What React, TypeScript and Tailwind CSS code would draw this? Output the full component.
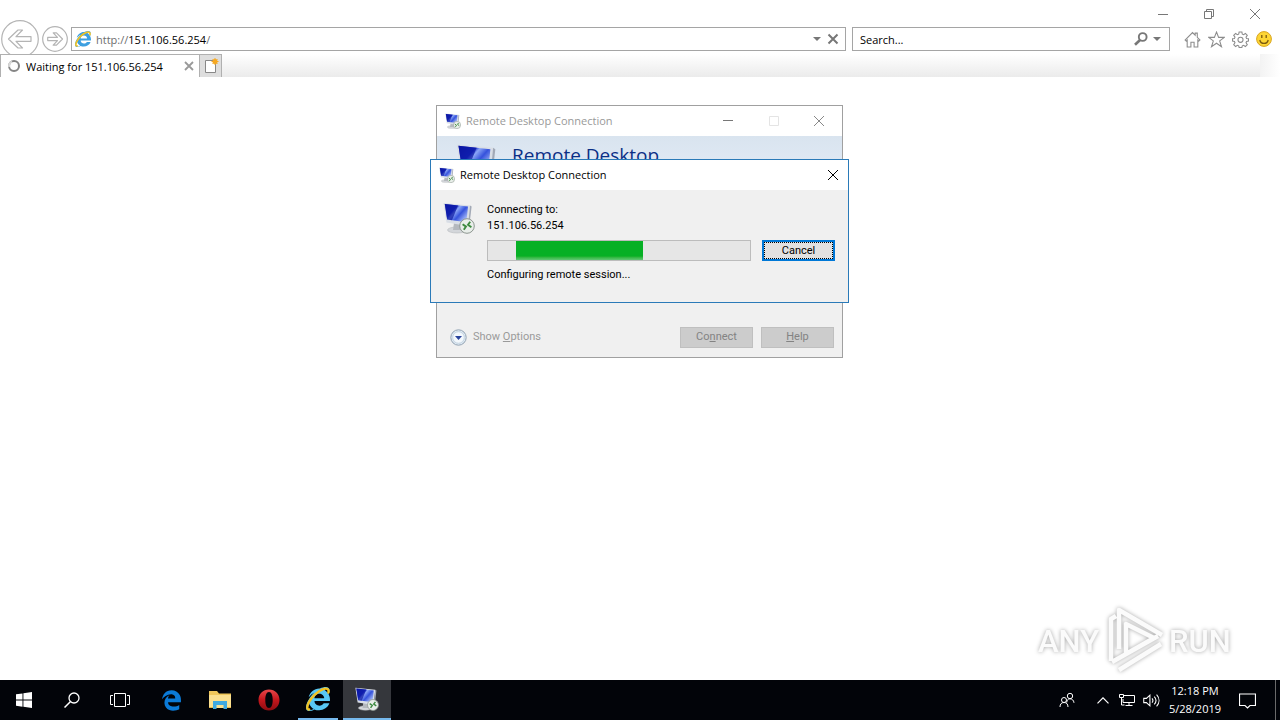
import type { ReactNode } from 'react';
import { FaInternetExplorer, FaEdgeLegacy } from 'react-icons/fa6';

const segoe = "font-['Open_Sans','Noto_Sans',sans-serif]";
const msSans = "font-['Roboto','Liberation_Sans',sans-serif]";

function RemoteIcon({ className }: { className: string }) {
  return (
    <svg viewBox="0 0 32 32" className={className} aria-hidden="true">
      <defs>
        <linearGradient id="rdScreen" x1="0" y1="0" x2="1" y2="0.7">
          <stop offset="0" stopColor="#0a14a8" />
          <stop offset="0.4" stopColor="#1a2fd0" />
          <stop offset="0.5" stopColor="#8ba6f6" />
          <stop offset="0.7" stopColor="#3552dc" />
          <stop offset="1" stopColor="#a9bdf8" />
        </linearGradient>
      </defs>
      <ellipse cx="14" cy="28" rx="9.5" ry="3" fill="#d3d6da" stroke="#b5b8bc" strokeWidth="0.6" />
      <path d="M11 21h7l1 7h-9z" fill="#b4b8be" />
      <path d="M0.5 1 27 3.5 25 24 3.5 20.5z" fill="#d9dee6" />
      <path d="M27 3.5 28.6 4.5 26.4 23.4 25 24z" fill="#a2a9b6" />
      <path d="M1.8 2 25 4.6 23.4 20.2 4.2 17.6z" fill="url(#rdScreen)" />
      <path d="M1.8 2 15 3.4 9 18.2 4.2 17.6z" fill="#0b179f" opacity="0.7" />
      <circle cx="24" cy="24" r="7.3" fill="#e9eeea" stroke="#8d9690" strokeWidth="1" />
      <path d="M19.6 22.2 23 24.6 20.8 27.8M28.4 25.2 25 22.8 27.2 19.8" fill="none" stroke="#3d8a3f" strokeWidth="1.9" />
    </svg>
  );
}

function IeIcon({ size }: { size: 'small' | 'large' }) {
  const small = size === 'small';
  return (
    <span className={small ? 'relative block size-4' : 'relative block size-6'}>
      <FaInternetExplorer className={small ? 'size-4 text-[#3d9fe0]' : 'size-6 text-[#58c8f5]'} />
      <svg viewBox="0 0 24 24" className="absolute inset-0 size-full" aria-hidden="true">
        <path
          d="M3.2 22.4C1 22.8.6 20 2.6 15.8 5.4 10.2 11.5 4.4 17 2.2 21 .7 23.2 2 22.4 5.6"
          fill="none"
          stroke="#f3c322"
          strokeWidth="2.4"
          strokeLinecap="round"
        />
      </svg>
    </span>
  );
}

function CloseGlyph({ className }: { className: string }) {
  return (
    <svg viewBox="0 0 12 12" className={className} fill="none" stroke="currentColor" aria-hidden="true">
      <path d="M1 1 11 11M11 1 1 11" />
    </svg>
  );
}

function Line({ children, box = 16, className = 'size-4' }: { children: ReactNode; box?: number; className?: string }) {
  return (
    <svg viewBox={`0 0 ${box} ${box}`} className={className} fill="none" stroke="currentColor" aria-hidden="true">
      {children}
    </svg>
  );
}

function BrowserHeader() {
  const tool = 'flex h-6 w-6 items-center justify-center text-[#8c8c8c]';
  return (
    <header className={`${segoe} shrink-0 text-[11px] leading-4 text-black`}>
      <div className="flex h-[27px] justify-end pr-[2px] text-[#777]">
        <button aria-label="Minimize" className="flex w-[46px] items-center justify-center">
          <Line box={12} className="size-3"><path d="M1 6.5h10" /></Line>
        </button>
        <button aria-label="Restore" className="flex w-[46px] items-center justify-center">
          <Line box={12} className="size-3"><path d="M1.5 3.5h7v7h-7zM3.5 3.5v-2h7v7h-2" /></Line>
        </button>
        <button aria-label="Close" className="flex w-[46px] items-center justify-center">
          <CloseGlyph className="size-3" />
        </button>
      </div>

      <div className="flex h-6 items-center pr-1 pl-px">
        <button aria-label="Back" className="shrink-0 text-[#b4b4b4]">
          <svg viewBox="0 0 38 38" className="size-[38px]" fill="none" stroke="currentColor" strokeWidth="1.2">
            <circle cx="19" cy="19" r="18.300" fill="#fff" />
            <path d="M7.5 19 17 10h4.500L15 16.700h15v4.600H15l6.500 6.700H17z" strokeLinejoin="round" />
          </svg>
        </button>
        <button aria-label="Forward" className="mx-[3px] shrink-0 text-[#b4b4b4]">
          <svg viewBox="0 0 26 26" className="size-[26px]" fill="none" stroke="currentColor" strokeWidth="1.2">
            <circle cx="13" cy="13" r="12.300" fill="#fff" />
            <path d="M20.500 13 14.500 6.800h-3.300l4.300 4.600H5.700v3.200h9.800l-4.300 4.600h3.300z" strokeLinejoin="round" />
          </svg>
        </button>
        <div className="flex h-6 min-w-0 flex-1 items-center border border-[#a5a5a5] bg-white pr-1 pl-[3px]">
          <IeIcon size="small" />
          <div className="ml-[5px] flex-1 pt-px text-[#6d6d6d]" role="textbox" aria-label="Address">
            http://<span className="text-black">151.106.56.254</span>/
          </div>
          <button aria-label="Show address bar options" className="flex w-4 justify-center">
            <svg viewBox="0 0 8 4" className="h-1 w-2" fill="#777"><path d="M0 0h8L4 4z" /></svg>
          </button>
          <button aria-label="Stop" className="flex w-4 justify-center text-[#777]">
            <svg viewBox="0 0 12 12" className="size-3" stroke="currentColor" strokeWidth="2"><path d="M1.500 1.500 10.500 10.500M10.500 1.500 1.500 10.500" /></svg>
          </button>
        </div>
        <div className="ml-[6px] flex h-6 w-[318px] items-center border border-[#a5a5a5] bg-white pr-2 pl-[7px]">
          <input aria-label="Search" placeholder="Search..." className="min-w-0 flex-1 pt-px outline-none placeholder:text-black" />
          <button aria-label="Run search" className="text-[#777]">
            <Line className="size-4"><circle cx="9.700" cy="6" r="3.900" strokeWidth="1.900" /><path d="M7 9 2 13.800" strokeWidth="2.600" /></Line>
          </button>
          <button aria-label="Search providers" className="ml-1 flex w-2 justify-center">
            <svg viewBox="0 0 8 4" className="h-1 w-2" fill="#777"><path d="M0 0h8L4 4z" /></svg>
          </button>
        </div>
        <div className="ml-[10px] flex">
          <button aria-label="Home" className={tool}>
            <Line className="size-[17px]"><path d="M1 8.500 8 1.500l2.500 2.500V2h2v4L15 8.500l-1 1-1-1V15h-3.500v-4.500h-3V15H3V8.500l-1 1z" /></Line>
          </button>
          <button aria-label="Favorites" className={tool}>
            <Line className="size-[17px]"><path d="m8 1 2 5h5.300l-4.300 3.300 1.700 5.500L8 11.500l-4.700 3.300L5 9.300.7 6H6z" /></Line>
          </button>
          <button aria-label="Tools" className={tool}>
            <Line className="size-[17px]">
              <path d="M6.700 1h2.600l.4 2 1.200.5L12.600 2.300l1.800 1.800-1.200 1.700.5 1.200 1.800.3v2.200l-1.800.4-.5 1.200 1.200 1.700-1.800 1.800-1.700-1.200-1.200.5-.4 1.600H6.700l-.4-1.600-1.200-.5-1.700 1.200-1.800-1.800 1.200-1.700-.5-1.200-1.800-.4V7.300L2.300 7l.5-1.200-1.200-1.700 1.800-1.800 1.700 1.200L6.300 3z" />
              <circle cx="8" cy="8.300" r="2.400" />
            </Line>
          </button>
          <button aria-label="Send a smile" className={tool}>
            <svg viewBox="0 0 16 16" className="size-4">
              <circle cx="8" cy="8" r="7.400" fill="#fdd535" stroke="#d9a520" />
              <path d="M5.800 4v3M10.200 4v3M3.800 9c1 4.500 7.400 4.500 8.400 0" fill="none" stroke="#7a5a10" strokeWidth="1.300" />
            </svg>
          </button>
        </div>
      </div>

      <div className="relative z-10 mt-[3px] flex h-[23px]">
        <div className="flex w-[199px] items-center border-t border-l border-[#b0b0b0] bg-white pr-[5px] pl-[6px]">
          <svg viewBox="0 0 14 14" className="size-[14px]" fill="none" strokeWidth="2">
            <circle cx="7" cy="7" r="5" stroke="#858585" />
            <path d="M2.200 8A5 5 0 0 1 5 2.500" stroke="#d8d8d8" />
          </svg>
          <span className="ml-[5px] flex-1 pt-px whitespace-nowrap">Waiting for 151.106.56.254</span>
          <button aria-label="Close tab" className="text-[#999]">
            <svg viewBox="0 0 10 10" className="size-[10px]" stroke="currentColor" strokeWidth="1.800"><path d="M1 1 9 9M9 1 1 9" /></svg>
          </button>
        </div>
        <button aria-label="New tab" className="flex w-[23px] items-center justify-center border border-b-0 border-[#b0b0b0] bg-[#dedede]">
          <svg viewBox="0 0 16 18" className="h-[18px] w-4">
            <path d="M2.500 3.500h10v12h-10z" fill="#fff" stroke="#888" />
            <circle cx="12" cy="4.500" r="2.500" fill="#f6a821" />
            <path d="M12 1v7M8.500 4.500h7M9.500 2l5 5M14.500 2l-5 5" stroke="#f6a821" />
          </svg>
        </button>
        <div className="flex-1 bg-linear-to-b from-white to-[#ebebeb]" />
        <div className="w-5 bg-linear-to-r from-[#f3f3f3] to-white" />
      </div>
    </header>
  );
}

function LauncherDialog() {
  const button = 'h-[21px] w-[73px] border border-[#bfbfbf] bg-[#cccccc] text-[#838383]';
  return (
    <section aria-label="Remote Desktop launcher" className="absolute top-7 left-1/2 -ml-[204px] flex h-[253px] w-[407px] flex-col border border-[#a0a0a0] bg-[#f0f0f0]">
      <div className={`${segoe} flex h-[30px] items-center bg-white pl-2 text-[11px] text-[#999]`}>
        <RemoteIcon className="size-4" />
        <span className="ml-[5px] flex-1">Remote Desktop Connection</span>
        <button aria-label="Minimize launcher" className="flex w-[46px] justify-center text-[#777]">
          <Line box={12} className="size-3"><path d="M1 5.500h10" /></Line>
        </button>
        <button aria-label="Maximize launcher" disabled className="flex w-[45px] justify-center text-[#e4e4e4]">
          <Line box={12} className="size-3"><path d="M1.500 1.500h9v9h-9z" /></Line>
        </button>
        <button aria-label="Close launcher" className="flex w-[46px] justify-center text-[#888]">
          <CloseGlyph className="size-3" />
        </button>
      </div>
      <div className="flex h-[60px] items-start bg-linear-to-b from-[#d9e4ef] to-[#e6eefa] pt-[7px] pl-[19px]">
        <RemoteIcon className="size-11" />
        <h1 className={`${segoe} ml-3 text-[19px] leading-6 font-medium text-[#0b2f86]`}>Remote Desktop</h1>
      </div>
      <div className={`${msSans} mt-auto flex items-center pr-2 pb-[9px] pl-[13px] text-[11px]`}>
        <button className="flex flex-1 items-center gap-[6px] text-[#9a9a9a]">
          <svg viewBox="0 0 17 17" className="size-[17px]" aria-hidden="true">
            <circle cx="8.500" cy="8.500" r="7.700" fill="#dfe9f2" stroke="#92a3b3" />
            <circle cx="8.500" cy="8.500" r="5.800" fill="#f3f8fc" stroke="#c3d4e2" />
            <path d="M5 7h7L8.500 11z" fill="#28439c" />
          </svg>
          <span>Show <u>O</u>ptions</span>
        </button>
        <button className={button}>Co<u>n</u>nect</button>
        <button className={`${button} ml-2`}><u>H</u>elp</button>
      </div>
    </section>
  );
}

function ConnectingDialog() {
  return (
    <section aria-label="Connection progress" className="absolute top-[82px] left-1/2 -ml-[210px] flex h-[144px] w-[419px] flex-col border border-[#2a7ab8] bg-[#f0f0f0]">
      <div className={`${segoe} flex h-[30px] items-center bg-white pl-2 text-[11px] text-black`}>
        <RemoteIcon className="size-4" />
        <span className="ml-[5px] flex-1">Remote Desktop Connection</span>
        <button aria-label="Close" className="flex w-[31px] justify-center">
          <CloseGlyph className="size-3" />
        </button>
      </div>
      <div className={`${msSans} flex pt-3 pr-[13px] pl-3 text-[11px] leading-4 text-black`}>
        <RemoteIcon className="size-8" />
        <div className="ml-3 flex-1">
          <p>Connecting to:</p>
          <p>151.106.56.254</p>
          <div className="my-[6px] flex items-center gap-[11px]">
            <div role="progressbar" aria-label="Connecting" className="h-[21px] flex-1 border border-[#bcbcbc] bg-[#e6e6e6] pl-7">
              <div className="h-full w-[127px] bg-linear-to-b from-[#06b025] from-80% to-[#5fc873]" />
            </div>
            <button className="h-[21px] w-[73px] border-2 border-[#0078d7] bg-[#e1e1e1] leading-[17px] outline-1 -outline-offset-3 outline-dotted outline-black">
              Cancel
            </button>
          </div>
          <p>Configuring remote session...</p>
        </div>
      </div>
    </section>
  );
}

function Watermark() {
  return (
    <svg
      viewBox="0 0 200 70"
      role="img"
      aria-label="ANY RUN"
      className="absolute right-[45px] bottom-[5px] h-[70px] w-[200px] drop-shadow-[0_0_2px_rgba(0,0,0,0.35)]"
    >
      <g fill="#fbfbfb" fontFamily="Roboto,'Liberation Sans',sans-serif" fontSize="31" fontWeight="500">
        <text x="3" y="47">ANY</text>
        <text x="134" y="47">RUN</text>
      </g>
      <g fill="none" stroke="#fbfbfb" strokeWidth="4.500" strokeLinejoin="round">
        <path d="M76 56V14l5-3M84 44V5L127 30M91 19v30l28-16zM77 57l46-26M84 65l42-26" />
      </g>
    </svg>
  );
}

function TaskButton({ label, children, state = '' }: { label: string; children: ReactNode; state?: string }) {
  return (
    <button aria-label={label} className={`flex h-10 w-12 items-center justify-center ${state}`}>
      {children}
    </button>
  );
}

function Taskbar() {
  return (
    <footer className={`${segoe} flex h-10 shrink-0 items-center bg-[#020409] text-white`}>
      <TaskButton label="Start">
        <svg viewBox="0 0 16 16" className="size-4" fill="#fff"><path d="M0 2.300 6.500 1.400v6.200H0zM7.400 1.300 16 0v7.600H7.400zM0 8.500h6.500v6.200L0 13.800zM7.400 8.500H16V16l-8.600-1.200z" /></svg>
      </TaskButton>
      <TaskButton label="Search Windows">
        <Line><circle cx="10" cy="6" r="5" strokeWidth="1.300" /><path d="M6.300 9.700.5 15.500" strokeWidth="1.500" /></Line>
      </TaskButton>
      <TaskButton label="Task View">
        <svg viewBox="0 0 20 14" className="h-[14px] w-5" fill="none" stroke="#fff"><path d="M4.500.5h11v13h-11zM3 2.500H.5v9H3M17 2.500h2.500v9H17" /></svg>
      </TaskButton>
      <div className="ml-[3px] flex gap-px">
        <TaskButton label="Microsoft Edge"><FaEdgeLegacy className="size-[21px] text-[#0b7bd8]" /></TaskButton>
        <TaskButton label="File Explorer">
          <svg viewBox="0 0 22 20" className="h-5 w-[22px]">
            <path d="M0 1h8l2 2.500h12V18H0z" fill="#f0c75a" />
            <path d="M0 5h22v13H0z" fill="#fbe08f" />
            <path d="M4 11h14v8h-3.500v-4h-7v4H4z" fill="#3fa9e0" />
            <path d="M0 18h4v-1H0zM18 18h4v-1h-4z" fill="#e6b84a" />
          </svg>
        </TaskButton>
        <TaskButton label="Opera">
          <svg viewBox="0 0 22 22" className="size-[22px]">
            <defs>
              <linearGradient id="operaRed" x1="0" y1="0" x2="0" y2="1">
                <stop offset="0" stopColor="#e8474a" />
                <stop offset="0.5" stopColor="#c4161c" />
                <stop offset="1" stopColor="#8c0d12" />
              </linearGradient>
            </defs>
            <path fillRule="evenodd" d="M11 .5C17 .5 21.500 5 21.500 11S17 21.500 11 21.500.5 17 .5 11 5 .5 11 .5ZM11 3C8.500 3 7.300 6.500 7.300 11S8.500 19 11 19s3.700-3.500 3.700-8S13.500 3 11 3Z" fill="url(#operaRed)" />
          </svg>
        </TaskButton>
        <TaskButton label="Internet Explorer">
          <span className="flex h-10 w-10 items-center justify-center border-b-2 border-[#76b9ed]"><IeIcon size="large" /></span>
        </TaskButton>
        <TaskButton label="Remote Desktop Connection" state="border-b-2 border-[#76b9ed] bg-[#35373c]">
          <RemoteIcon className="size-6" />
        </TaskButton>
      </div>

      <div className="ml-auto flex items-center">
        <button aria-label="People" className="mr-4">
          <Line className="size-4"><circle cx="11" cy="4" r="2.700" /><path d="M7.700 10.500C8 8 9 6.800 11 6.800s3.800 1.500 4 4" /><circle cx="5" cy="8" r="2.500" /><path d="M1 15c0-3 1.500-4.500 4-4.500S9 12 9 15" /></Line>
        </button>
        <button aria-label="Show hidden icons" className="flex w-6 justify-center">
          <svg viewBox="0 0 12 7" className="h-[7px] w-3" fill="none" stroke="#fff" strokeWidth="1.200"><path d="M.5 6.300 6 .8l5.500 5.500" /></svg>
        </button>
        <button aria-label="Network" className="flex w-6 justify-center">
          <Line><path d="M5 3.500h10.500v7H4V7M10 10.500v3M6.500 13.500h7M.5 2.500h4v3h-4zM2.500 5.500v7.500h3" /></Line>
        </button>
        <button aria-label="Volume" className="flex w-6 justify-center">
          <Line className="size-[17px]"><path d="M.7 6h2.500L6.500 3v10L3.200 10H.7zM8.500 6c1 1.200 1 2.800 0 4M10.600 4.300c2 2.200 2 5.200 0 7.400M12.800 2.500c3 3.300 3 7.700 0 11" /></Line>
        </button>
        <button className="w-16 text-center text-[11px] leading-[18px] whitespace-nowrap">
          <span className="block">12:18 PM</span>
          <span className="block">5/28/2019</span>
        </button>
        <button aria-label="Action center" className="flex w-10 justify-center">
          <Line box={17} className="size-[17px]"><path d="M.5 2h16v11.500H11L8.500 16 6 13.500H.5z" strokeWidth="1.200" /></Line>
        </button>
        <div className="ml-2 h-10 w-[5px] border-l border-[#6a6a6a]" />
      </div>
    </footer>
  );
}

export default function App() {
  return (
    <div className="flex h-screen flex-col overflow-hidden bg-white">
      <BrowserHeader />
      <main className="relative flex-1">
        <LauncherDialog />
        <ConnectingDialog />
        <Watermark />
      </main>
      <Taskbar />
    </div>
  );
}
